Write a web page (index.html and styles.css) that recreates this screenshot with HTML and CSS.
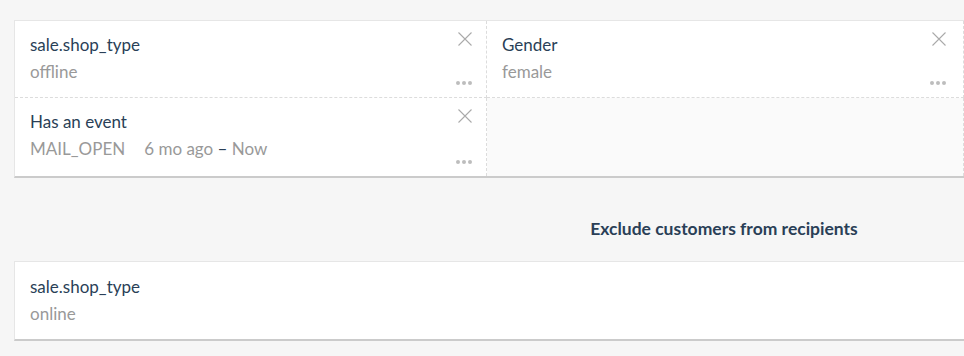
FILE: index.html
```html
<!DOCTYPE html>
<html>
  <head>
    <title>Recipients</title>
    <link rel="stylesheet" href="styles.css">
  </head>
  <body>
    <div id="page">
      <div id="segment">
        <div class="card grid">
          <div class="cond">
            <div class="cond-title">sale.shop_type</div>
            <div class="cond-value">offline</div>
            <svg class="close" width="14" height="14" viewBox="0 0 14 14"><path d="M0.5 0.5 L13.5 13.5 M13.5 0.5 L0.5 13.5" stroke="#aaa" stroke-width="1.1" fill="none"/></svg>
            <span class="more"><i></i><i></i><i></i></span>
          </div>
          <div class="cond">
            <div class="cond-title">Gender</div>
            <div class="cond-value">female</div>
            <svg class="close" width="14" height="14" viewBox="0 0 14 14"><path d="M0.5 0.5 L13.5 13.5 M13.5 0.5 L0.5 13.5" stroke="#aaa" stroke-width="1.1" fill="none"/></svg>
            <span class="more"><i></i><i></i><i></i></span>
          </div>
          <div class="cond last">
            <div class="cond-title">Has an event</div>
            <div class="cond-value"><span class="event">MAIL_OPEN</span>6 mo ago <span class="dash">–</span> Now</div>
            <svg class="close" width="14" height="14" viewBox="0 0 14 14"><path d="M0.5 0.5 L13.5 13.5 M13.5 0.5 L0.5 13.5" stroke="#aaa" stroke-width="1.1" fill="none"/></svg>
            <span class="more"><i></i><i></i><i></i></span>
          </div>
          <div class="cond last empty"></div>
        </div>

        <h3 id="exclude-title">Exclude customers from recipients</h3>

        <div class="card wide">
          <div class="cond last">
            <div class="cond-title">sale.shop_type</div>
            <div class="cond-value">online</div>
          </div>
        </div>
      </div>
    </div>
  </body>
</html>
```

FILE: styles.css
```css
body { margin: 0; background: #f6f6f6; font-family: Lato, "Open Sans", sans-serif; }

#page { width: 964px; overflow: hidden; }
#segment { width: 1420px; padding: 20px 0 0 14px; }

.card {
  background: #fff;
  border: 1px solid #e6e6e6;
  border-bottom: 2px solid #cbcbcb;
}

.grid {
  width: 949px;
  display: grid;
  grid-template-columns: 472px 477px;
}

.wide { width: 1420px; }

.cond {
  position: relative;
  box-sizing: border-box;
  padding: 12px 15px 13px;
  border-right: 1px dashed #dcdcdc;
  border-bottom: 1px dashed #dcdcdc;
}
.cond.last { border-bottom: none; padding-bottom: 15px; }
.wide .cond { border-right: none; padding: 13px 15px 13px; }
.cond.empty { background: #fafafa; }

.cond-title { font-size: 17px; line-height: 24px; color: #2a3f57; }
.cond-value { font-size: 17px; line-height: 24px; margin-top: 3px; color: #999; }
.event { margin-right: 19px; }
.dash { color: #2a3f57; }

.close { position: absolute; top: 11px; right: 14px; }

.more { position: absolute; right: 14px; bottom: 12px; display: flex; gap: 2px; }
.more i { width: 4px; height: 4px; border-radius: 50%; background: #bdbdbd; }
.grid .cond:nth-child(2) .more, .grid .cond:nth-child(2) .close { right: 17px; }

#exclude-title {
  margin: 39px 0 20px;
  text-align: center;
  font-size: 17.5px;
  line-height: 24px;
  font-weight: bold;
  color: #2a3f57;
}
```
